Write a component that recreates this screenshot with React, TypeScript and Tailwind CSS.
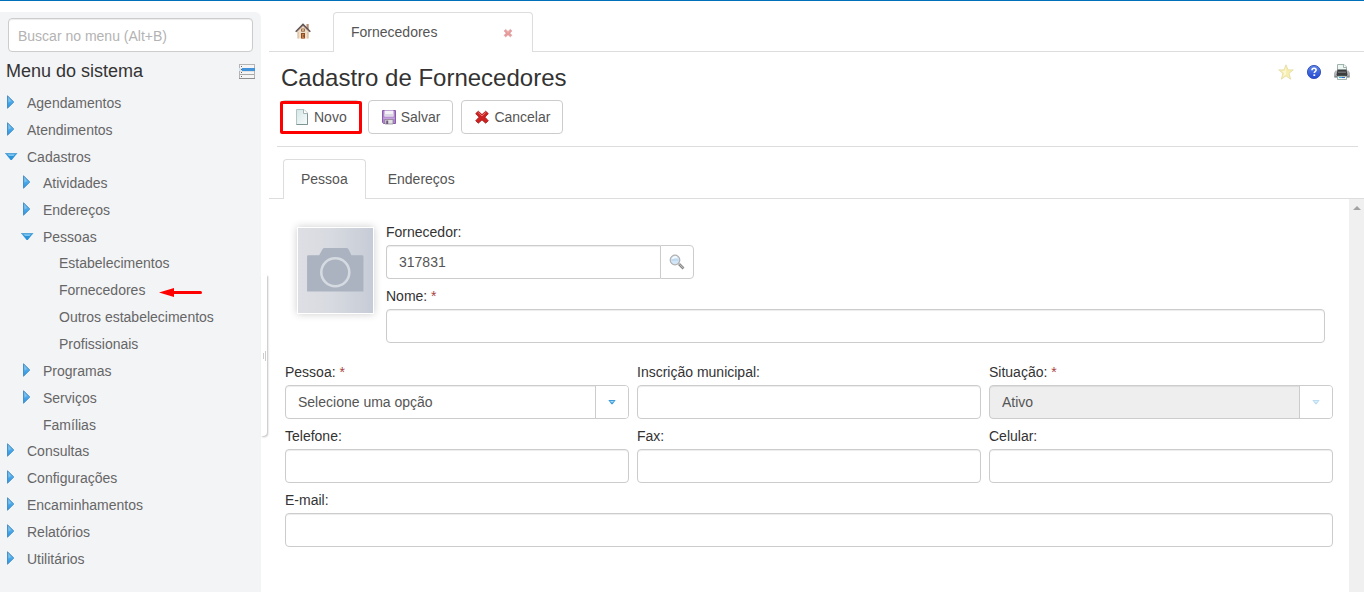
import React from 'react';

type MenuItem = {
  label: string;
  open?: boolean;
  leaf?: boolean;
  marked?: boolean;
  children?: MenuItem[];
};

const menu: MenuItem[] = [
  { label: 'Agendamentos' },
  { label: 'Atendimentos' },
  {
    label: 'Cadastros',
    open: true,
    children: [
      { label: 'Atividades' },
      { label: 'Endereços' },
      {
        label: 'Pessoas',
        open: true,
        children: [
          { label: 'Estabelecimentos', leaf: true },
          { label: 'Fornecedores', leaf: true, marked: true },
          { label: 'Outros estabelecimentos', leaf: true },
          { label: 'Profissionais', leaf: true },
        ],
      },
      { label: 'Programas' },
      { label: 'Serviços' },
      { label: 'Famílias', leaf: true },
    ],
  },
  { label: 'Consultas' },
  { label: 'Configurações' },
  { label: 'Encaminhamentos' },
  { label: 'Relatórios' },
  { label: 'Utilitários' },
];

const fieldClass =
  'h-[34px] w-full rounded border border-[#ccc] bg-white px-3 text-sm text-[#555] shadow-[inset_0_1px_1px_rgba(0,0,0,0.075)] outline-none';

function TreeClosed() {
  return (
    <svg width="16" height="16" viewBox="0 0 16 16" aria-hidden="true">
      <defs>
        <linearGradient id="treeRight" x1="0" y1="0" x2="0" y2="1">
          <stop offset="0" stopColor="#7cc0ec" />
          <stop offset="1" stopColor="#1f93e6" />
        </linearGradient>
      </defs>
      <path d="M4.500 1.800v12.400L10.800 8z" fill="url(#treeRight)" stroke="#4a8fc6" strokeWidth="1" />
      <path d="M5.500 4v4.500l2.500-1.500z" fill="#8accf2" opacity=".7" />
    </svg>
  );
}

function TreeOpen() {
  return (
    <svg width="16" height="16" viewBox="0 0 16 16" aria-hidden="true">
      <path d="M2 5h12.400L8.800 12H7.600z" fill="#2c93d8" />
      <path d="M2 5h12.400l-.9 1.200H3z" fill="#5ba6d8" />
      <path d="M4.400 6.300h7.600L10.500 8H6z" fill="#7cc6f1" />
    </svg>
  );
}

function HomeIcon() {
  return (
    <svg width="16" height="16" viewBox="0 0 16 16" aria-hidden="true">
      <path d="M11.500 1h2.200v5h-2.200z" fill="#b98d74" />
      <path d="M2.500 8.500 8 3l5.500 5.500V15.500h-11z" fill="#f0dfc8" />
      <path d="M2.500 9h1.200v6.500H2.500zM12.300 9h1.200v6.500h-1.200z" fill="#d9bd9c" />
      <path d="M.7 8.700 8 1.400l7.300 7.300" fill="none" stroke="#5d5351" strokeWidth="1.500" />
      <path d="M2 8.900 8 3l6 5.900" fill="none" stroke="#c9a594" strokeWidth=".9" />
      <path d="M6.200 5.600h3.600v3H6.200z" fill="#85593c" />
      <path d="M7 6.300h2v1.500H7z" fill="#f1c795" />
      <path d="M6 10h4v5.500H6z" fill="#8d4d26" />
      <path d="M7 11h2v4.500H7z" fill="#c8814b" />
      <path d="M8.300 12.600h.8v.9h-.8z" fill="#45230f" />
    </svg>
  );
}

function CrossIcon({ size }: { size: number }) {
  return (
    <svg width={size} height={size} viewBox="0 0 16 16" aria-hidden="true">
      <path
        d="M4.300 2.200 8 5.600l3.700-3.400 2.600 2.400L11 8.200l3.300 3.600-2.600 2.400L8 10.900l-3.700 3.300-2.600-2.400L5 8.200 1.700 4.600z"
        fill="#cc2222"
        stroke="#a81616"
        strokeWidth=".8"
      />
      <path d="m4.300 3.500 3.700 3.500 3.700-3.500" fill="none" stroke="#e87272" strokeWidth="1" />
    </svg>
  );
}

function PageIcon() {
  return (
    <svg width="16" height="16" viewBox="0 0 16 16" aria-hidden="true">
      <defs>
        <linearGradient id="sheet" x1="0" y1="0" x2="1" y2="1">
          <stop offset="0" stopColor="#d6e6e6" />
          <stop offset="1" stopColor="#f8fcfc" />
        </linearGradient>
      </defs>
      <path d="M2.500.5H10l3.500 3.500v11.500h-11z" fill="url(#sheet)" stroke="#b3c4c4" />
      <path d="M2.500 15.500h11V4" fill="none" stroke="#7f9494" />
      <path d="M9.500.5v4h4" fill="#fff" stroke="#a4b6b6" />
    </svg>
  );
}

function SaveIcon() {
  return (
    <svg width="16" height="16" viewBox="0 0 16 16" aria-hidden="true">
      <path d="M1.500 1.500h13v13h-12l-1-1z" fill="#b084cc" stroke="#8a5cae" />
      <path d="M3.500 1.500h9v6h-9z" fill="#f4f1f7" />
      <path d="M3.500 5h9v2.500h-9z" fill="#dcd7e4" />
      <path d="M2.200 8.600h11.600v1.500H2.200z" fill="#c5a2db" />
      <path d="M4 10.500h8V15H4z" fill="#e2e2e2" stroke="#85808b" strokeWidth=".7" />
      <path d="M5.200 11.500h2V15h-2z" fill="#6f5a7e" />
    </svg>
  );
}

function MenuPanelIcon() {
  return (
    <svg width="16" height="16" viewBox="0 0 16 16" shapeRendering="crispEdges" aria-hidden="true">
      <path d="M0 0h16v15H0z" fill="#b4b4b4" />
      <path d="M1 1h14v13H1z" fill="#f5f5f5" />
      <path d="M3 4h13v3H3z" fill="#4393da" />
      <path d="M0 4h3v3H0z" fill="#d3e6f6" />
      <path d="M1 7h14v1H1z" fill="#e2e2e2" />
      <path d="M1 10h14v1H1z" fill="#a8a8a8" />
      <path d="M2 2h1v1H2zM2 5h1v1H2zM2 8h1v1H2zM2 12h1v1H2z" fill="#666" />
      <path d="M0 14h16v1H0z" fill="#8e8e8e" />
    </svg>
  );
}

function StarIcon() {
  return (
    <svg width="16" height="16" viewBox="0 0 16 16" aria-hidden="true">
      <path
        d="m8 .8 2 5.100h5.300l-4.200 3.400 1.500 5.900L8 11.800l-4.600 3.400 1.500-5.900L.7 5.900H6z"
        fill="#f7efb0"
        stroke="#e5dca6"
        strokeWidth=".9"
      />
      <path d="M8 3.500v7l-2.500 1.800.8-3.300-2.300-2h2.800z" fill="#fcf8d5" />
    </svg>
  );
}

function HelpIcon() {
  return (
    <svg width="16" height="16" viewBox="0 0 16 16" aria-hidden="true">
      <defs>
        <linearGradient id="help" x1="0" y1="0" x2="0" y2="1">
          <stop offset="0" stopColor="#5f86e6" />
          <stop offset="1" stopColor="#2349d3" />
        </linearGradient>
      </defs>
      <circle cx="8" cy="8" r="6.600" fill="url(#help)" stroke="#2f4db5" strokeWidth=".9" />
      <path
        d="M6 6.200C6 4.800 7 4.300 8.100 4.300c1.200 0 2 .7 2 1.700 0 1.500-1.800 1.500-1.800 3"
        fill="none"
        stroke="#fff"
        strokeWidth="1.600"
      />
      <path d="M7.400 10.300h1.800V12H7.400z" fill="#fff" />
    </svg>
  );
}

function PrinterIcon() {
  return (
    <svg width="16" height="16" viewBox="0 0 16 16" aria-hidden="true">
      <path d="M3.500 8V.5H10L12.500 3v5z" fill="#edf6f3" stroke="#9db3ab" />
      <path d="M9.500.5v3h3" fill="#fff" stroke="#8ba39b" strokeWidth=".8" />
      <path d="M1.500 6.500h13L16 9v3.500q0 1-1 1H1q-1 0-1-1V9z" fill="#b4b7b9" />
      <path d="M3.500 5.500h9l1 5.500h-11z" fill="#3b3c3e" />
      <path d="M4 7.500h8v1.500H4z" fill="#6d6e70" />
      <path d="M.5 11.500h2.500v2H.5zM13 11.500h2.500v2H13z" fill="#85898b" />
      <path d="M3 11h10v1.200H3z" fill="#333" />
      <path d="M3.500 12.200h9v3.300h-9z" fill="#f4f8fa" stroke="#8ba39b" strokeWidth=".8" />
      <path d="M5 13h3v1H5z" fill="#3bb4d8" />
      <path d="M8 13h3v1H8z" fill="#3467c9" />
    </svg>
  );
}

function SearchIcon() {
  return (
    <svg width="16" height="16" viewBox="0 0 16 16" aria-hidden="true">
      <path d="m10 10 4.500 4.500" stroke="#858585" strokeWidth="2.600" />
      <path d="m10.500 10.300 4 4" stroke="#c9c9c9" strokeWidth="1" />
      <circle cx="6" cy="6" r="4.800" fill="#d3e6f7" stroke="#b0b0b0" strokeWidth="1.200" />
      <path d="M2.500 6h7" stroke="#aecdea" strokeWidth="1" />
      <path d="M3.500 4.800a3 3 0 0 1 4.500-1.300" fill="none" stroke="#fff" strokeWidth="1.200" />
    </svg>
  );
}

function DropArrow() {
  return (
    <svg width="8" height="6" viewBox="0 0 8 6" aria-hidden="true">
      <path d="M.3 1h7.400L4.600 5.200H3.400z" fill="#3f9cda" />
      <path d="M2 2h4L4.500 3.500h-1z" fill="#a5d8f5" />
    </svg>
  );
}

function PhotoPlaceholder() {
  return (
    <svg width="75" height="85" viewBox="0 0 76 86" role="img" aria-label="Foto">
      <defs>
        <linearGradient id="photo" x1="0" y1="0" x2="1" y2="0">
          <stop offset="0" stopColor="#dedfe4" />
          <stop offset=".45" stopColor="#d7dae0" />
          <stop offset="1" stopColor="#c6ccd6" />
        </linearGradient>
      </defs>
      <path d="M0 0h76v86H0z" fill="url(#photo)" />
      <path
        d="M10.500 27.500h11l3.300-6q.7-1.200 2.200-1.200h22q1.500 0 2.200 1.200l3 6h10.600q1.500 0 1.500 1.500v35.300H9.200V29q0-1.500 1.300-1.500z"
        fill="#abb3c1"
      />
      <circle cx="37.800" cy="44.800" r="14.200" fill="#abb3c1" stroke="#d6dae1" strokeWidth="2.600" />
    </svg>
  );
}

function RedArrow() {
  return (
    <svg className="mt-0.5 ml-3.5" width="44" height="12" viewBox="0 0 44 12" aria-hidden="true">
      <path d="M13 7.500h28.500" stroke="#f00" strokeWidth="3" strokeLinecap="round" />
      <path d="M0 7.500 15 2.900v9z" fill="#f00" />
    </svg>
  );
}

function MenuList({ items, className }: { items: MenuItem[]; className: string }) {
  return (
    <ul className={className}>
      {items.map((item) => (
        <li key={item.label}>
          <a href="#" className="flex h-[27px] items-center text-sm text-[#666]">
            <span className="mr-2 mb-0.5 w-4 shrink-0">
              {!item.leaf && (item.open ? <TreeOpen /> : <TreeClosed />)}
            </span>
            {item.label}
            {item.marked && <RedArrow />}
          </a>
          {item.children && (
            <MenuList
              items={item.children}
              className={item.label === 'Cadastros' ? '-my-px pl-4' : '-mt-px pl-4'}
            />
          )}
        </li>
      ))}
    </ul>
  );
}

function Label({ htmlFor, children, required }: { htmlFor: string; children: string; required?: boolean }) {
  return (
    <label htmlFor={htmlFor} className="text-sm leading-5 text-[#333]">
      {children}
      {required && <span className="text-[#a94442]"> *</span>}
    </label>
  );
}

function TextField({
  id,
  label,
  required,
  className = '',
}: {
  id: string;
  label: string;
  required?: boolean;
  className?: string;
}) {
  return (
    <div className={'flex flex-col gap-[3px] ' + className}>
      <Label htmlFor={id} required={required}>
        {label}
      </Label>
      <input id={id} type="text" className={fieldClass} />
    </div>
  );
}

function SelectField({
  id,
  label,
  option,
  disabled,
}: {
  id: string;
  label: string;
  option: string;
  disabled?: boolean;
}) {
  return (
    <div className="flex flex-col gap-[3px]">
      <Label htmlFor={id} required>
        {label}
      </Label>
      <div className="relative">
        <select
          id={id}
          disabled={disabled}
          className={fieldClass + ' appearance-none pr-10 opacity-100 disabled:bg-[#eee]'}
        >
          <option>{option}</option>
        </select>
        <span className="pointer-events-none absolute inset-y-px right-px flex w-[33px] items-center justify-center rounded-r-[3px] border-l border-[#ccc] bg-white pr-px">
          <span className={disabled ? 'opacity-35' : ''}>
            <DropArrow />
          </span>
        </span>
      </div>
    </div>
  );
}

const buttonClass =
  'relative flex h-[34px] items-center gap-1 rounded border border-[#ccc] bg-white px-3 text-sm text-[#555]';

export default function App() {
  return (
    <div className="flex min-h-screen flex-col border-t border-[#0070ba] bg-white font-['Liberation_Sans',Arial,sans-serif]">
      <div className="mt-[11px] flex flex-1 gap-2">
        <aside className="relative w-[261px] shrink-0 rounded-tr-md bg-[#f3f4f6] pt-1.5">
          <div className="px-2">
            <input
              type="search"
              aria-label="Buscar no menu"
              placeholder="Buscar no menu (Alt+B)"
              className="h-[34px] w-full rounded border border-[#ccc] bg-white px-[9px] pt-0.5 text-sm shadow-[inset_0_1px_1px_rgba(0,0,0,0.075)] outline-none placeholder:text-[#b3b3b3]"
            />
          </div>
          <div className="flex h-[37px] items-center justify-between px-1.5">
            <h2 className="text-lg text-[#333]">Menu do sistema</h2>
            <button type="button" aria-label="Alternar menu" className="pt-0.5">
              <MenuPanelIcon />
            </button>
          </div>
          <nav>
            <MenuList items={menu} className="pl-[3px]" />
          </nav>
          <button
            type="button"
            aria-label="Recolher menu"
            className="absolute top-[263px] left-full flex h-[161px] w-1.5 items-center justify-center gap-px rounded-br bg-white shadow-[1px_1px_2px_rgba(0,0,0,0.25)]"
          >
            <span className="h-1.5 w-px bg-[#ccc]" />
            <span className="h-2.5 w-px bg-[#ccc]" />
          </button>
        </aside>

        <main className="flex min-w-0 flex-1 flex-col">
          <div className="flex h-10">
            <button
              type="button"
              aria-label="Início"
              className="flex w-16 items-center justify-center border-b border-[#ddd] pb-0.5 pl-1"
            >
              <HomeIcon />
            </button>
            <div className="flex w-[200px] items-center justify-between rounded-t border border-b-0 border-[#ddd] pr-[19px] pb-0.5 pl-[17px]">
              <a href="#" className="text-sm text-[#555]">
                Fornecedores
              </a>
              <button type="button" aria-label="Fechar" className="pt-0.5 opacity-45">
                <CrossIcon size={10} />
              </button>
            </div>
            <div className="flex-1 border-b border-[#ddd]" />
          </div>

          <header className="mr-1.5 ml-2 border-b border-[#ddd] pt-2 pb-3 pl-1">
            <div className="flex items-center justify-between">
              <h1 className="text-2xl leading-9 text-[#333]">Cadastro de Fornecedores</h1>
              <div className="flex gap-3 pr-2 pb-3">
                <button type="button" aria-label="Favorito">
                  <StarIcon />
                </button>
                <button type="button" aria-label="Ajuda">
                  <HelpIcon />
                </button>
                <button type="button" aria-label="Imprimir">
                  <PrinterIcon />
                </button>
              </div>
            </div>
            <div className="mt-1 flex gap-2">
              <button type="button" className={buttonClass}>
                <PageIcon />
                Novo
                <span className="absolute top-0 -right-[3px] -bottom-px -left-0.5 rounded-xs border-3 border-[#f00]" />
              </button>
              <button type="button" className={buttonClass}>
                <SaveIcon />
                Salvar
              </button>
              <button type="button" className={buttonClass}>
                <CrossIcon size={16} />
                Cancelar
              </button>
            </div>
          </header>

          <div className="mt-3 flex h-10 text-sm text-[#555]">
            <div className="w-3.5 border-b border-[#ddd]" />
            <button type="button" className="rounded-t border border-b-0 border-[#ddd] px-[17px] pb-0.5">
              Pessoa
            </button>
            <button type="button" className="border-b border-[#ddd] pl-[22px]">
              Endereços
            </button>
            <div className="flex-1 border-b border-[#ddd]" />
          </div>

          <div className="flex flex-1">
            <form className="flex min-w-0 flex-1 flex-col gap-[19px] px-4 pt-[23px]">
              <div className="flex pr-2 pl-3">
                <div className="mt-[5px] mr-3 self-start border border-white shadow-[0_0_8px_rgba(0,0,0,0.2)]">
                  <PhotoPlaceholder />
                </div>
                <div className="flex min-w-0 flex-1 flex-col gap-[7px]">
                  <div className="flex flex-col gap-[3px]">
                    <Label htmlFor="fornecedor">Fornecedor:</Label>
                    <div className="flex w-[308px]">
                      <input
                        id="fornecedor"
                        type="text"
                        defaultValue="317831"
                        className={fieldClass + ' min-w-0 flex-1 rounded-r-none border-r-0'}
                      />
                      <button
                        type="button"
                        aria-label="Pesquisar"
                        className="flex w-[34px] shrink-0 items-center justify-center rounded-r border border-[#ccc]"
                      >
                        <SearchIcon />
                      </button>
                    </div>
                  </div>
                  <TextField id="nome" label="Nome:" required />
                </div>
              </div>

              <div className="grid grid-cols-3 gap-x-2 gap-y-[7px]">
                <SelectField id="pessoa" label="Pessoa:" option="Selecione uma opção" />
                <TextField id="inscricao" label="Inscrição municipal:" />
                <SelectField id="situacao" label="Situação:" option="Ativo" disabled />
                <TextField id="telefone" label="Telefone:" />
                <TextField id="fax" label="Fax:" />
                <TextField id="celular" label="Celular:" />
                <TextField id="email" label="E-mail:" className="col-span-3" />
              </div>
            </form>
            <div className="flex w-[15px] justify-center bg-[#f0f0f0] pt-[7px] pl-px">
              <svg width="8" height="5" viewBox="0 0 8 5" aria-hidden="true">
                <path d="M0 4 4 0l4 4z" fill="#a3a3a3" />
              </svg>
            </div>
          </div>
        </main>
      </div>
    </div>
  );
}
